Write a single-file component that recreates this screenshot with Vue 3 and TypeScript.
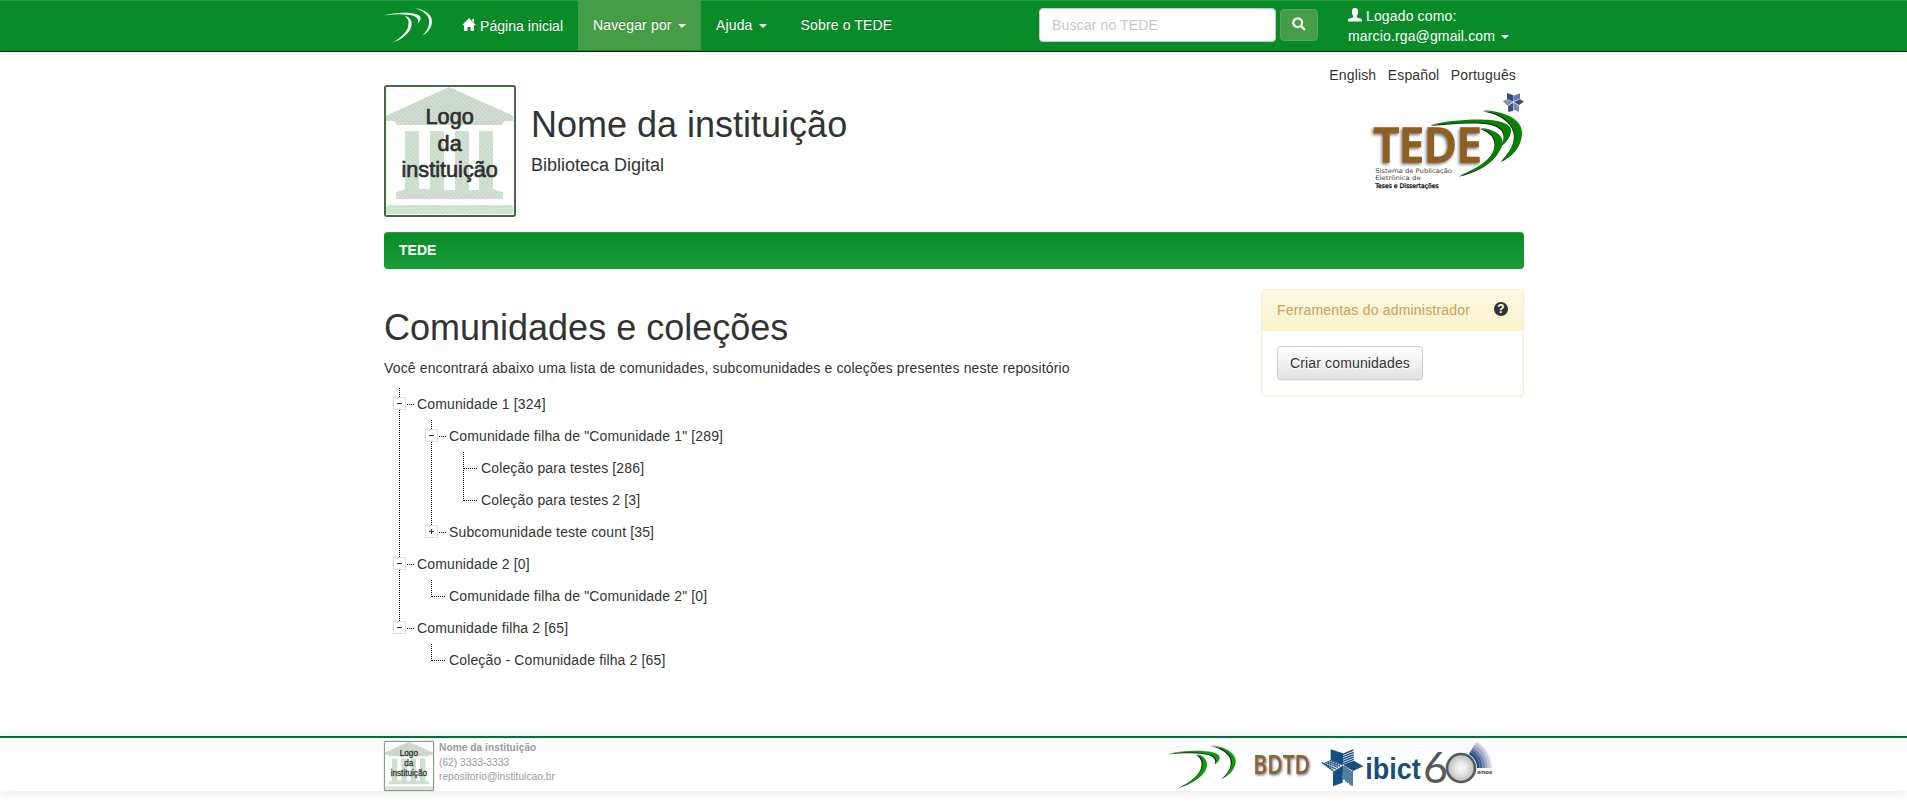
<script setup lang="ts">
import { h, type FunctionalComponent } from 'vue'

type Cell = 'blank' | 'line' | 'tee' | 'end' | 'minus' | 'minusEnd' | 'plusEnd'

interface Row {
  cells: Cell[]
  label: string
}

const rows: Row[] = [
  { cells: ['minus'], label: 'Comunidade 1 [324]' },
  { cells: ['line', 'minus'], label: 'Comunidade filha de "Comunidade 1" [289]' },
  { cells: ['line', 'line', 'tee'], label: 'Coleção para testes [286]' },
  { cells: ['line', 'line', 'end'], label: 'Coleção para testes 2 [3]' },
  { cells: ['line', 'plusEnd'], label: 'Subcomunidade teste count [35]' },
  { cells: ['minus'], label: 'Comunidade 2 [0]' },
  { cells: ['line', 'end'], label: 'Comunidade filha de "Comunidade 2" [0]' },
  { cells: ['minusEnd'], label: 'Comunidade filha 2 [65]' },
  { cells: ['blank', 'end'], label: 'Coleção - Comunidade filha 2 [65]' },
]

const languages: string[] = ['English', 'Español', 'Português']

const isToggle = (c: Cell): boolean => c === 'minus' || c === 'minusEnd' || c === 'plusEnd'
const lineEnd = (c: Cell): number => (c === 'end' || c === 'minusEnd' || c === 'plusEnd' ? 17 : 32)

const swooshes: string[] = [
  'M127,0 C180,6 205,28 203,52 C201,75 182,92 162,101 C187,80 200,54 185,31 C174,15 150,5 127,0Z',
  'M0,27 C60,12 152,14 155,36 C156,45 149,52 142,56 C149,44 144,32 112,26 C80,21 40,22 0,27Z',
  'M86,27 C116,34 123,55 112,77 C99,99 70,117 35,127 C66,112 93,92 101,71 C107,51 104,38 86,27Z',
]

const tedeSwooshes: string[] = [
  'M430,76 C505,80 548,108 546,146 C545,185 515,215 484,228 C520,190 533,158 517,127 C503,101 472,84 430,76Z',
  'M272,120 C350,100 508,92 513,134 C514,152 500,170 486,180 C500,152 494,128 455,117 C400,107 330,115 272,120Z',
  'M420,128 C476,134 502,160 480,195 C460,235 410,262 358,272 C414,250 453,225 464,190 C471,160 455,140 420,128Z',
]

const hatches: number[] = Array.from({ length: 60 }, (_, i) => -390 + i * 13)

const Building: FunctionalComponent = () =>
  h('svg', { viewBox: '0 0 396 396' }, [
    h('rect', { x: 3, y: 3, width: 390, height: 390, rx: 5, fill: '#fff' }),
    h('g', { fill: '#c9dccb' }, [
      h('path', { d: 'M6,92 L195,6 L388,92 V108 H362 L352,120 H40 L32,108 H6Z', fill: '#c8d5c9' }),
      h('path', { d: 'M63,138H105V312H138V138H180V315H213V138H255V315H285V138H327V312L357,322V342H36V322L63,312Z' }),
      h('path', { d: 'M12,360H382L388,366V387H6V366Z', fill: '#cbe3cb' }),
    ]),
    h(
      'g',
      { stroke: '#fff', 'stroke-width': 1.8, opacity: 0.6 },
      hatches.map((x) => h('path', { d: `M${x},6 l381,381` })),
    ),
    h('rect', { x: 3, y: 3, width: 390, height: 390, rx: 5, fill: 'none', stroke: '#456b45', 'stroke-width': 6 }),
    h(
      'g',
      {
        fill: '#2f2f2f',
        stroke: '#2f2f2f',
        'stroke-width': 2,
        'font-size': 65,
        'text-anchor': 'middle',
        'font-family': 'Liberation Sans, sans-serif',
      },
      [
        h('text', { x: 197, y: 117 }, 'Logo'),
        h('text', { x: 197, y: 198 }, 'da'),
        h('text', { x: 197, y: 277 }, 'instituição'),
      ],
    ),
  ])
</script>

<template>
  <div class="page">
    <nav class="navbar">
      <svg class="nav-logo" viewBox="0 0 203 128" preserveAspectRatio="none">
        <path v-for="d in swooshes" :key="d" :d="d" />
      </svg>
      <a class="nav-item home">
        <svg class="glyph" viewBox="0 0 14 14"><path d="M7,0 L14,7.3 H12 V13 H8.5 V9 H5.5 V13 H2 V7.3 H0Z M10.2,1 H12 V4.5 L10.2,2.8Z" /></svg>
        <span class="home-label">Página inicial</span>
      </a>
      <a class="nav-item active">Navegar por <i class="caret"></i></a>
      <a class="nav-item">Ajuda <i class="caret"></i></a>
      <a class="nav-item about">Sobre o TEDE</a>
      <form class="search" @submit.prevent>
        <input type="text" placeholder="Buscar no TEDE" />
        <button type="submit">
          <svg viewBox="0 0 14 14"><circle cx="5.7" cy="5.7" r="4.4" /><path d="M9,9 L13,13" /></svg>
        </button>
      </form>
      <a class="user">
        <span class="user-line">
          <svg class="glyph" viewBox="0 0 14 14"><path d="M7,0 C9.3,0 10.2,1.6 10.1,4 C10,6 9.4,7 8.8,7.8 V9 C9.5,10.2 14,10.2 14,12.2 V13.5 H0 V12.2 C0,10.2 4.5,10.2 5.2,9 V7.8 C4.6,7 4,6 3.9,4 C3.8,1.6 4.7,0 7,0Z" /></svg>
          Logado como:
        </span>
        <span>marcio.rga@gmail.com <i class="caret"></i></span>
      </a>
    </nav>

    <div class="languages">
      <a v-for="l in languages" :key="l">{{ l }}</a>
    </div>

    <header class="brand">
      <Building class="building" />
      <div class="titles">
        <h1>Nome da instituição</h1>
        <h4>Biblioteca Digital</h4>
      </div>
      <svg class="tede" viewBox="90 15 462 300">
        <g class="tede-dark" transform="translate(-2 3)">
          <path v-for="d in tedeSwooshes" :key="d" :d="d" />
        </g>
        <g class="tede-green">
          <path v-for="d in tedeSwooshes" :key="d" :d="d" />
        </g>
        <g class="tede-star">
          <path d="M501,24 L520,31 V50 L501,42Z" />
          <path d="M521,32 L540,25 V41 L521,49Z" opacity=".75" />
          <path d="M488,49 L501,43 L519,51 L503,62Z" opacity=".6" />
          <path d="M521,51 L540,43 L552,50 L537,60Z" />
          <path d="M504,63 L520,53 V77 L505,81Z" />
          <path d="M521,53 L537,62 V80 L522,75Z" opacity=".65" />
        </g>
        <text class="tede-word" x="101" y="231" textLength="324" lengthAdjust="spacingAndGlyphs">TEDE</text>
        <g class="tede-small">
          <text x="106" y="263" textLength="230" lengthAdjust="spacingAndGlyphs">Sistema de Publicação</text>
          <text x="106" y="285" textLength="136" lengthAdjust="spacingAndGlyphs">Eletrônica de</text>
          <text class="strong" x="106" y="308" textLength="190" lengthAdjust="spacingAndGlyphs">Teses e Dissertações</text>
        </g>
      </svg>
    </header>

    <div class="breadcrumb">TEDE</div>

    <main class="content">
      <section class="listing">
        <h2>Comunidades e coleções</h2>
        <p>Você encontrará abaixo uma lista de comunidades, subcomunidades e coleções presentes neste repositório</p>
        <div class="tree">
          <div v-for="row in rows" :key="row.label" class="row">
            <svg v-for="(c, i) in row.cells" :key="i" class="cell" viewBox="0 0 32 32">
              <line v-if="c !== 'blank'" x1="15.5" y1="0" x2="15.5" :y2="lineEnd(c)" />
              <line v-if="c === 'tee' || c === 'end'" x1="16" y1="16.5" x2="30" y2="16.5" />
              <template v-if="isToggle(c)">
                <line x1="23" y1="16.5" x2="30" y2="16.5" />
                <rect x="9.5" y="9.5" width="12" height="12" />
                <path d="M13,15.5h5" />
                <path v-if="c === 'plusEnd'" d="M15.5,13v5" />
              </template>
            </svg>
            <a>{{ row.label }}</a>
          </div>
        </div>
      </section>

      <aside class="panel">
        <div class="panel-head">
          Ferramentas do administrador
          <span class="help">?</span>
        </div>
        <div class="panel-body">
          <button type="button">Criar comunidades</button>
        </div>
      </aside>
    </main>

    <footer class="footer">
      <Building class="building-small" />
      <div class="contact">
        <strong>Nome da instituição</strong>
        <span>(62) 3333-3333</span>
        <span>repositorio@instituicao.br</span>
      </div>
      <svg class="bdtd" viewBox="0 0 435 135">
        <g transform="translate(-3 2)"><path v-for="d in swooshes" :key="d" :d="d" fill="#111" /></g>
        <path v-for="d in swooshes" :key="d" :d="d" fill="#0a9d0a" />
        <text x="256" y="87" textLength="170" lengthAdjust="spacingAndGlyphs">BDTD</text>
      </svg>
      <svg class="ibict" viewBox="32 35 516 135">
        <defs>
          <radialGradient id="disc">
            <stop offset="0" stop-color="#fff" />
            <stop offset=".45" stop-color="#e4e4e4" />
            <stop offset="1" stop-color="#b9b9b9" />
          </radialGradient>
        </defs>
        <g fill="#174e80">
          <path d="M61,57 L98,69 V103 L61,89Z" />
          <path d="M98,103 L131,91 L159,108 L128,122Z" />
          <path d="M68,125 L98,105 L97,157 L68,168Z" />
        </g>
        <g stroke="#174e80" stroke-width="4.4">
          <path d="M98,72 L129,59 M98,79 L130,66 M98,86 L130,73 M98,93 L130,80 M98,100 L130,87" />
          <path d="M58,90 L96,103 M51,93 L89,107 M45,96 L83,111 M39,99 L76,116 M34,96 L70,122" stroke-dasharray="6 1" />
          <path d="M101,107 V148 M107,110 V154 M113,114 V158 M119,118 V163 M125,122 V167" />
        </g>
        <text class="ibict-word" x="165" y="147" textLength="166" lengthAdjust="spacingAndGlyphs">ibict</text>
        <g fill="none" stroke="#2b4389" stroke-width="8">
          <path d="M478,68 A52,52 0 0 1 504,113" stroke="#174e80" />
          <path d="M482,61 A60,60 0 0 1 512,113" opacity=".85" />
          <path d="M486,54 A68,68 0 0 1 520,113" opacity=".65" />
          <path d="M490,47 A76,76 0 0 1 528,113" opacity=".45" />
          <path d="M494,41 A84,84 0 0 1 536,113" opacity=".28" />
          <path d="M498,37 A91,91 0 0 1 543,113" opacity=".13" />
        </g>
        <text class="six" x="338" y="158" textLength="75" lengthAdjust="spacingAndGlyphs">6</text>
        <circle cx="452" cy="113" r="42" fill="url(#disc)" stroke="#58595b" stroke-width="8" />
        <text class="anos" x="500" y="130" textLength="46" lengthAdjust="spacingAndGlyphs">anos</text>
      </svg>
    </footer>
  </div>
</template>

<style>
body {
  margin: 0;
  background: #fff;
}
</style>

<style scoped>
.page {
  height: 811px;
  display: flex;
  flex-direction: column;
  overflow: hidden;
  font: 14px/20px 'Liberation Sans', Arial, sans-serif;
  letter-spacing: 0.145px;
  color: #333;
}
.page > * {
  box-sizing: border-box;
  flex-shrink: 0;
}
svg {
  overflow: visible;
  letter-spacing: 0;
}
.navbar {
  height: 52px;
  display: flex;
  padding: 0 383px 0 384px;
  background: #098b28;
  border-bottom: 1px solid #041c08;
  box-shadow: inset 0 1px 0 #2c9c47, 0 1px 10px rgba(0, 0, 0, 0.05);
  color: #fff;
}
.nav-logo {
  width: 48px;
  height: 35px;
  margin: 8px 14px 0 0;
  fill: #fff;
}
.nav-item {
  height: 50px;
  box-sizing: border-box;
  padding: 15px;
  white-space: nowrap;
  text-shadow: 0 -1px 0 rgba(0, 0, 0, 0.25);
}
.home {
  width: 132px;
  display: flex;
  gap: 4px;
  padding-top: 16px;
  padding-left: 16px;
  letter-spacing: 0.04px;
}
.home-label {
  white-space: nowrap;
}
.glyph {
  width: 14px;
  height: 14px;
  fill: #fff;
}
.home .glyph {
  margin-top: 2px;
}
.active {
  width: 123px;
  background: #459e45;
}
.about {
  margin-left: 4px;
}
.caret {
  display: inline-block;
  margin-left: 2px;
  vertical-align: middle;
  border-top: 4px solid #fff;
  border-left: 4px solid transparent;
  border-right: 4px solid transparent;
}
.search {
  display: flex;
  align-items: center;
  gap: 4px;
  height: 50px;
  margin-left: auto;
}
.search input {
  box-sizing: border-box;
  width: 237px;
  height: 34px;
  padding: 6px 12px;
  border: 1px solid #ccc;
  border-radius: 4px;
  background: #fff;
  box-shadow: inset 0 1px 1px rgba(0, 0, 0, 0.075);
  font: inherit;
  letter-spacing: inherit;
}
.search input::placeholder {
  color: #c6c6c6;
}
.search button {
  width: 38px;
  height: 32px;
  padding: 0;
  border: 1px solid #55a855;
  border-radius: 4px;
  background: #459e45;
}
.search button svg {
  display: block;
  width: 14px;
  height: 14px;
  margin: -2px auto 0;
  fill: none;
  stroke: #fff;
  stroke-width: 2.2;
}
.user {
  width: 176px;
  margin-left: 30px;
  padding-top: 6px;
  display: flex;
  flex-direction: column;
  white-space: nowrap;
}
.user-line {
  display: flex;
  gap: 4px;
}
.user-line .glyph {
  margin-top: 2px;
}
.languages {
  height: 33px;
  padding: 13px 391px 0 384px;
  display: flex;
  justify-content: flex-end;
  gap: 11.5px;
}
.brand {
  height: 147px;
  display: flex;
  padding: 0 383px 0 384px;
}
.building {
  width: 132px;
  height: 132px;
}
.titles {
  margin-left: 15px;
}
h1,
h2,
h4 {
  margin: 0;
  font-weight: 400;
  letter-spacing: 0;
}
h1 {
  margin-top: 20px;
  font-size: 36px;
  line-height: 40px;
}
h4 {
  margin-top: 10px;
  font-size: 18px;
  line-height: 20px;
}
.tede {
  width: 154px;
  height: 100px;
  margin: 5px 0 0 auto;
}
.tede-dark {
  fill: #222;
}
.tede-green {
  fill: #078207;
}
.tede-star {
  fill: #3a4a86;
}
.tede-word {
  font: 600 140px 'Open Sans', sans-serif;
  fill: #8f5f22;
  stroke: #8f5f22;
  stroke-width: 4;
  filter: drop-shadow(-4px 5px 4px rgba(0, 0, 0, 0.55));
}
.tede-small {
  font: 19px 'DejaVu Sans', sans-serif;
  fill: #444;
}
.tede-small .strong {
  fill: #000;
  stroke: #000;
  stroke-width: 0.8;
}
.breadcrumb {
  height: 37px;
  margin: 0 383px 0 384px;
  padding: 8px 15px;
  border-radius: 4px;
  background: linear-gradient(#098b28, #1a9b39);
  box-shadow: inset 0 1px 0 rgba(255, 255, 255, 0.15), 0 1px 2px rgba(0, 0, 0, 0.05);
  color: #fff;
  font-weight: 700;
  letter-spacing: 0;
}
.content {
  height: 467px;
  display: flex;
  justify-content: space-between;
  align-items: flex-start;
  padding: 20px 383px 0 384px;
}
h2 {
  margin-top: 19px;
  font-size: 36px;
  line-height: 40px;
}
.listing p {
  margin: 10px 0;
}
.row {
  display: flex;
  height: 32px;
  line-height: 32px;
}
.row a {
  margin-left: 1px;
}
.cell {
  width: 32px;
  height: 32px;
}
.cell line {
  stroke: #000;
  stroke-dasharray: 1 1;
}
.cell rect {
  fill: #fff;
  stroke: #ddd;
}
.cell path {
  stroke: #333;
}
.panel {
  box-sizing: border-box;
  width: 263px;
  height: 107px;
  border: 1px solid #faebcc;
  border-radius: 4px;
  box-shadow: 0 1px 2px rgba(0, 0, 0, 0.05);
}
.panel-head {
  display: flex;
  justify-content: space-between;
  padding: 10px 15px;
  height: 21px;
  background: linear-gradient(#fcf8e3, #faf2cc);
  border-radius: 3px 3px 0 0;
  color: #c9a055;
  letter-spacing: 0.2px;
}
.help {
  width: 14px;
  height: 14px;
  margin-top: 2px;
  border-radius: 50%;
  background: #333;
  color: #fff;
  font-size: 12px;
  font-weight: 700;
  line-height: 14px;
  text-align: center;
}
.panel-body {
  padding: 15px;
}
.panel-body button {
  width: 146px;
  height: 34px;
  padding: 0;
  border: 1px solid #ccc;
  border-radius: 4px;
  background: linear-gradient(#fff, #e2e2e2);
  box-shadow: inset 0 1px 0 rgba(255, 255, 255, 0.15), 0 1px 1px rgba(0, 0, 0, 0.075);
  color: #333;
  font: inherit;
  letter-spacing: inherit;
  text-shadow: 0 1px 0 #fff;
}
.footer {
  height: 55px;
  display: flex;
  padding: 3px 383px 0 384px;
  border-top: 2px solid #007038;
  background: #fff;
  box-shadow: 0 1px 10px rgba(0, 0, 0, 0.1);
}
.building-small {
  width: 50px;
  height: 50px;
}
.contact {
  display: flex;
  flex-direction: column;
  margin: 0 0 0 5px;
  color: #999;
  font-size: 10.2px;
  line-height: 14.5px;
  letter-spacing: 0.03px;
}
.bdtd {
  width: 145px;
  height: 45px;
  margin: 4px 8px 0 auto;
}
.bdtd text {
  font: 600 80px 'Open Sans', sans-serif;
  fill: #8a6438;
  filter: drop-shadow(3px 4px 3px rgba(0, 0, 0, 0.55));
}
.ibict {
  width: 172px;
  height: 45px;
  margin: 1px 31px 0 0;
}
.ibict-word {
  font: 700 90px 'Liberation Sans', sans-serif;
  fill: #174e80;
}
.six {
  font: 400 126px Lato, sans-serif;
  fill: #58595b;
}
.anos {
  font: 700 18px 'Open Sans', sans-serif;
  fill: #444;
}
</style>
